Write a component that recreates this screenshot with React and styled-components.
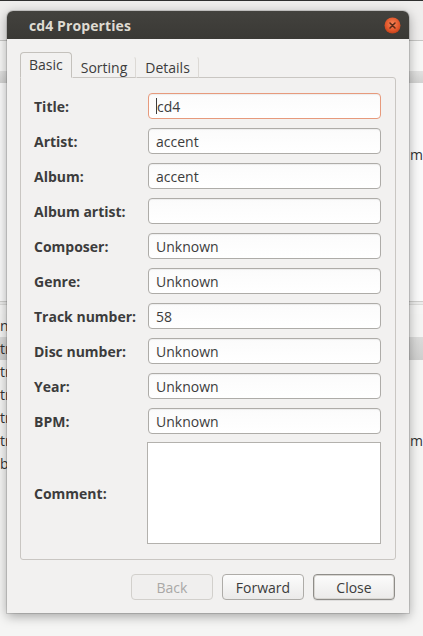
import React from "react";
import styled, { createGlobalStyle } from "styled-components";

const fields = [
  { label: "Title:", value: "cd4", focused: true },
  { label: "Artist:", value: "accent" },
  { label: "Album:", value: "accent" },
  { label: "Album artist:", value: "" },
  { label: "Composer:", value: "Unknown" },
  { label: "Genre:", value: "Unknown" },
  { label: "Track number:", value: "58" },
  { label: "Disc number:", value: "Unknown" },
  { label: "Year:", value: "Unknown" },
  { label: "BPM:", value: "Unknown" },
];

// rows of the player window behind the dialog, only their edges show
const listRows = [
  { left: "n", right: "" },
  { left: "tr", right: "", selected: true },
  { left: "tr", right: "" },
  { left: "tr", right: "" },
  { left: "tr", right: "" },
  { left: "tr", right: "m" },
  { left: "b", right: "" },
];

const CloseIcon = () => (
  <svg width="17" height="17" viewBox="0 0 17 17">
    <defs>
      <radialGradient id="cg" cx="50%" cy="40%" r="60%">
        <stop offset="0%" stopColor="#f7875a" />
        <stop offset="70%" stopColor="#e2562a" />
        <stop offset="100%" stopColor="#c2421b" />
      </radialGradient>
    </defs>
    <circle cx="8.5" cy="8.5" r="8" fill="url(#cg)" />
    <path
      d="M6 6 L11 11 M11 6 L6 11"
      stroke="#5a2a18"
      strokeWidth="1.5"
      strokeLinecap="round"
    />
  </svg>
);

const App = () => {
  return (
    <>
      <GlobalStyle />
      <Screen>
        <TopEdge />
        <Toolbar />
        <BgBlock $height={30} $bg="#f7f7f6" />
        <Band />
        <BgList>
          <BgRow $height={23} style={{ marginTop: 60 }}>
            <RightCell>m</RightCell>
          </BgRow>
        </BgList>
        <Divider />
        <BgBlock $height={9} $bg="#f6f6f5" />
        {listRows.map((row, i) => (
          <BgRow key={i} $height={23} $selected={row.selected}>
            <LeftCell>{row.left}</LeftCell>
            <RightCell>{row.right}</RightCell>
          </BgRow>
        ))}

        <Dialog>
          <TitleBar>
            <TitleText>cd4 Properties</TitleText>
            <CloseButton>
              <CloseIcon />
            </CloseButton>
          </TitleBar>
          <DialogBody>
            <Tabs>
              <Tab $active>Basic</Tab>
              <Tab>Sorting</Tab>
              <Tab>Details</Tab>
            </Tabs>
            <Panel>
              {fields.map((f) => (
                <FieldRow key={f.label}>
                  <Label>{f.label}</Label>
                  <Entry $focused={f.focused}>
                    {f.focused && <Caret />}
                    {f.value}
                  </Entry>
                </FieldRow>
              ))}
              <CommentRow>
                <Label>Comment:</Label>
                <CommentBox />
              </CommentRow>
            </Panel>
            <ButtonRow>
              <Button $disabled>Back</Button>
              <Button>Forward</Button>
              <Button $default>Close</Button>
            </ButtonRow>
          </DialogBody>
        </Dialog>
      </Screen>
    </>
  );
};

const GlobalStyle = createGlobalStyle`
  html, body {
    margin: 0;
    padding: 0;
    width: 423px;
    height: 636px;
    overflow: hidden;
    background: #f5f5f4;
  }
  * {
    box-sizing: border-box;
  }
`;

const Screen = styled.div`
  position: relative;
  width: 423px;
  height: 636px;
  overflow: hidden;
  display: flex;
  flex-direction: column;
  background: #f5f5f4;
  font-family: "Open Sans", "DejaVu Sans", sans-serif;
  color: #3c3c3c;
`;

const TopEdge = styled.div`
  height: 1px;
  background: #2f2f2f;
  flex-shrink: 0;
`;

const Toolbar = styled.div`
  height: 40px;
  flex-shrink: 0;
  background: #efeeed;
  border-bottom: 1px solid #c6c6c4;
`;

const BgBlock = styled.div`
  height: ${(p) => p.$height}px;
  flex-shrink: 0;
  background: ${(p) => p.$bg};
`;

const Band = styled.div`
  height: 12px;
  flex-shrink: 0;
  background: linear-gradient(#e2e2e1, #d2d2d1);
`;

const BgList = styled.div`
  height: 218px;
  flex-shrink: 0;
  background: #fafafa;
`;

const Divider = styled.div`
  height: 4px;
  flex-shrink: 0;
  border-top: 1px solid #cfcfcd;
  border-bottom: 1px solid #dcdcda;
  background: #ececeb;
`;

const BgRow = styled.div`
  height: ${(p) => p.$height}px;
  flex-shrink: 0;
  display: flex;
  align-items: center;
  font-size: 14px;
  color: #333;
  background: ${(p) =>
    p.$selected ? "linear-gradient(#dcdcdb, #cfcfce)" : "transparent"};
`;

const LeftCell = styled.div`
  padding-left: 0;
  white-space: nowrap;
`;

const RightCell = styled.div`
  margin-left: auto;
  width: 13px;
  white-space: nowrap;
`;

const Dialog = styled.div`
  position: absolute;
  left: 7px;
  top: 11px;
  width: 402px;
  height: 602px;
  display: flex;
  flex-direction: column;
  border-radius: 6px 6px 0 0;
  overflow: hidden;
  box-shadow: 0 3px 12px rgba(0, 0, 0, 0.35), 0 0 0 1px rgba(0, 0, 0, 0.12);
`;

const TitleBar = styled.div`
  height: 28px;
  flex-shrink: 0;
  display: flex;
  align-items: center;
  padding: 0 8px 0 22px;
  background: linear-gradient(#43423e, #3a3935);
`;

const TitleText = styled.div`
  font-family: "Open Sans", "DejaVu Sans", sans-serif;
  font-weight: 700;
  font-size: 14px;
  color: #dfdbd2;
  letter-spacing: 0.1px;
`;

const CloseButton = styled.div`
  margin-left: auto;
  width: 17px;
  height: 17px;
  display: flex;
`;

const DialogBody = styled.div`
  flex: 1;
  display: flex;
  flex-direction: column;
  padding: 13px 13px 14px 13px;
  background: #f2f1f0;
`;

const Tabs = styled.div`
  height: 26px;
  display: flex;
  align-items: flex-end;
  margin-bottom: -1px;
  position: relative;
  z-index: 1;
`;

const Tab = styled.div`
  height: ${(p) => (p.$active ? 26 : 22)}px;
  padding: 0 8px;
  display: flex;
  align-items: center;
  padding-bottom: ${(p) => (p.$active ? 2 : 0)}px;
  font-size: 14px;
  color: #3c3c3c;
  background: #f2f1f0;
  border: 1px solid ${(p) => (p.$active ? "#c4c1bc" : "transparent")};
  border-bottom-color: ${(p) => (p.$active ? "#f2f1f0" : "#c9c6c2")};
  border-right-color: ${(p) => (p.$active ? "#c4c1bc" : "#dcd9d5")};
  border-radius: 4px 4px 0 0;
`;

const Panel = styled.div`
  height: 483px;
  display: flex;
  flex-direction: column;
  gap: 9px;
  padding: 15px 14px 14px 13px;
  border: 1px solid #c9c6c2;
  border-radius: 0 3px 3px 3px;
  background: #f2f1f0;
`;

const FieldRow = styled.div`
  height: 26px;
  display: flex;
  align-items: center;
`;

const CommentRow = styled.div`
  display: flex;
  align-items: center;
  margin-top: -1px;
`;

const Label = styled.div`
  width: 114px;
  font-size: 14px;
  font-weight: 700;
  color: #3c3c3c;
  white-space: nowrap;
`;

const Entry = styled.div`
  width: 233px;
  height: 26px;
  display: flex;
  align-items: center;
  padding: 0 7px;
  font-size: 14px;
  color: #3c3c3c;
  background: linear-gradient(#fbfbfb, #ffffff);
  border: 1px solid ${(p) => (p.$focused ? "#e79a7c" : "#aeaca8")};
  border-radius: 4px;
  box-shadow: inset 0 1px 1px rgba(0, 0, 0, 0.06);
`;

const Caret = styled.span`
  width: 1px;
  height: 16px;
  background: #3c3c3c;
`;

const CommentBox = styled.div`
  width: 235px;
  height: 102px;
  margin-left: -1px;
  background: #ffffff;
  border: 1px solid #b3b1ad;
`;

const ButtonRow = styled.div`
  margin-top: 14px;
  display: flex;
  justify-content: flex-end;
  gap: 9px;
  padding-right: 1px;
`;

const Button = styled.div`
  width: 82px;
  height: 26px;
  display: flex;
  align-items: center;
  justify-content: center;
  font-size: 14px;
  color: ${(p) => (p.$disabled ? "#a9a8a6" : "#3c3c3c")};
  background: ${(p) =>
    p.$disabled ? "#f0efee" : "linear-gradient(#fcfcfc, #ebeae9)"};
  border: 1px solid
    ${(p) => (p.$disabled ? "#d2d0cc" : p.$default ? "#8f8d89" : "#aeaca8")};
  border-radius: 4px;
  box-shadow: ${(p) =>
    p.$default ? "inset 0 0 0 1px #d8d6d2, 0 1px 0 rgba(0,0,0,0.08)" : "none"};
`;

export default App;
